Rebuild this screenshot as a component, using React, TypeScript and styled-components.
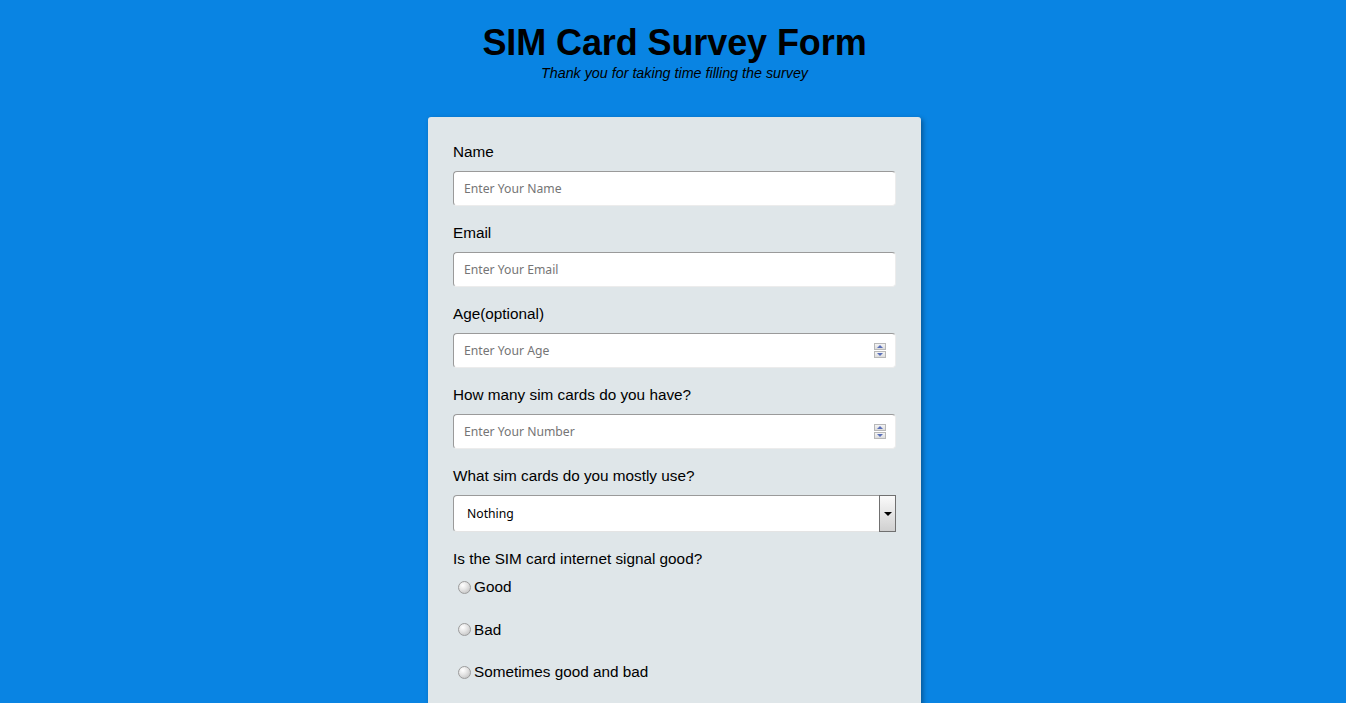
import React from "react";
import styled, { createGlobalStyle } from "styled-components";

const Global = createGlobalStyle`
  html, body { margin: 0; padding: 0; }
  body {
    background: #0984e3;
    font-family: "Liberation Sans", Arial, sans-serif;
    color: #000;
  }
`;

const Page = styled.div`
  display: flex;
  flex-direction: column;
  align-items: center;
  padding-top: 21px;
  padding-left: 3px;
`;

const Title = styled.h1`
  margin: 0;
  font-size: 36px;
  font-weight: bold;
  line-height: 44px;
  letter-spacing: -0.1px;
`;

const Subtitle = styled.p`
  margin: 0;
  font-size: 14.3px;
  font-style: italic;
  line-height: 16px;
`;

const Card = styled.form`
  margin-top: 36px;
  width: 493px;
  box-sizing: border-box;
  background: #dfe6e9;
  border-radius: 3px;
  box-shadow: 2px 2px 5px rgba(0, 0, 0, 0.35);
  padding: 26px 25px 40px;
  display: flex;
  flex-direction: column;
`;

const Group = styled.div`
  display: flex;
  flex-direction: column;
  margin-bottom: 18px;
`;

const Label = styled.label`
  font-size: 15.3px;
  line-height: 18px;
  margin-bottom: 10px;
`;

const Field = styled.div`
  position: relative;
  display: flex;
`;

const Input = styled.input`
  width: 100%;
  height: 35px;
  box-sizing: border-box;
  padding: 0 10px;
  font-family: "Noto Sans", sans-serif;
  font-size: 12.2px;
  background: #fff;
  border-radius: 4px;
  border-top: 1px solid #9a9a9a;
  border-left: 1px solid #9a9a9a;
  border-right: 1px solid #ececec;
  border-bottom: 1px solid #ececec;
  outline: none;
  &::placeholder { color: #757575; }
`;

const Spinner = styled.div`
  position: absolute;
  right: 10px;
  top: 10px;
  width: 12px;
  height: 15px;
  display: flex;
  flex-direction: column;
  gap: 1px;
`;

const SpinBtn = styled.div<{ $down?: boolean }>`
  flex: 1;
  box-sizing: border-box;
  border: 1px solid #b8b8b8;
  background: linear-gradient(#f4f4f4, #dcdcdc);
  display: flex;
  align-items: center;
  justify-content: center;
  &::after {
    content: "";
    border-left: 3px solid transparent;
    border-right: 3px solid transparent;
    ${(p) =>
      p.$down
        ? "border-top: 3px solid #5a6fb8;"
        : "border-bottom: 3px solid #5a6fb8;"}
  }
`;

const Select = styled.select`
  width: 100%;
  height: 37px;
  box-sizing: border-box;
  appearance: none;
  padding: 0 13px;
  font-family: "Noto Sans", sans-serif;
  font-size: 12.2px;
  color: #000;
  background: #fff;
  border-radius: 4px;
  border-top: 1px solid #9a9a9a;
  border-left: 1px solid #9a9a9a;
  border-right: 1px solid #9a9a9a;
  border-bottom: 1px solid #e4e4e4;
  outline: none;
`;

const SelectArrow = styled.div`
  position: absolute;
  right: 0;
  top: 0;
  width: 17px;
  height: 37px;
  box-sizing: border-box;
  border: 1px solid #707070;
  background: linear-gradient(#fafafa, #d0d0d0);
  display: flex;
  align-items: center;
  justify-content: center;
  pointer-events: none;
  &::after {
    content: "";
    border-left: 4px solid transparent;
    border-right: 4px solid transparent;
    border-top: 4px solid #000;
  }
`;

const RadioList = styled.div`
  display: flex;
  flex-direction: column;
  gap: 24.5px;
  padding-left: 5px;
  margin-top: 0;
`;

const RadioRow = styled.label`
  display: flex;
  align-items: center;
  gap: 3px;
  font-size: 15.3px;
  line-height: 18px;
`;

const Radio = styled.input`
  appearance: none;
  margin: 0;
  width: 13px;
  height: 13px;
  border-radius: 50%;
  border: 1px solid #9c9c9c;
  background: radial-gradient(circle at 35% 30%, #ffffff 0%, #e6e6e6 40%, #b9b9b9 100%);
  box-sizing: border-box;
`;

function NumberField({ placeholder }: { placeholder: string }) {
  return (
    <Field>
      <Input type="text" placeholder={placeholder} />
      <Spinner>
        <SpinBtn />
        <SpinBtn $down />
      </Spinner>
    </Field>
  );
}

export default function App() {
  return (
    <>
      <Global />
      <Page>
        <Title>SIM Card Survey Form</Title>
        <Subtitle>Thank you for taking time filling the survey</Subtitle>
        <Card onSubmit={(e) => e.preventDefault()}>
          <Group>
            <Label>Name</Label>
            <Field>
              <Input type="text" placeholder="Enter Your Name" />
            </Field>
          </Group>
          <Group>
            <Label>Email</Label>
            <Field>
              <Input type="email" placeholder="Enter Your Email" />
            </Field>
          </Group>
          <Group>
            <Label>Age(optional)</Label>
            <NumberField placeholder="Enter Your Age" />
          </Group>
          <Group>
            <Label>How many sim cards do you have?</Label>
            <NumberField placeholder="Enter Your Number" />
          </Group>
          <Group>
            <Label>What sim cards do you mostly use?</Label>
            <Field>
              <Select defaultValue="nothing">
                <option value="nothing">Nothing</option>
              </Select>
              <SelectArrow />
            </Field>
          </Group>
          <Group>
            <Label>Is the SIM card internet signal good?</Label>
            <RadioList>
              <RadioRow>
                <Radio type="radio" name="signal" />
                Good
              </RadioRow>
              <RadioRow>
                <Radio type="radio" name="signal" />
                Bad
              </RadioRow>
              <RadioRow>
                <Radio type="radio" name="signal" />
                Sometimes good and bad
              </RadioRow>
            </RadioList>
          </Group>
        </Card>
      </Page>
    </>
  );
}
